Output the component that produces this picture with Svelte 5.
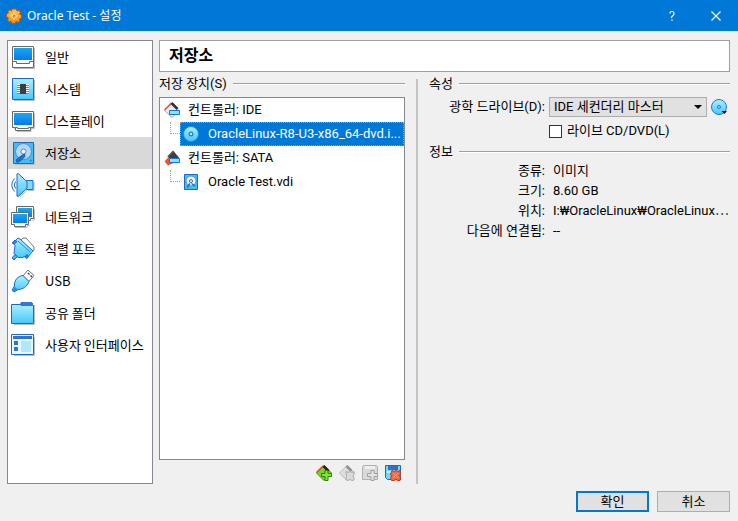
<script lang="ts">
  type Page = { id: string; label: string };

  const pages: Page[] = [
    { id: 'general', label: '일반' },
    { id: 'system', label: '시스템' },
    { id: 'display', label: '디스플레이' },
    { id: 'storage', label: '저장소' },
    { id: 'audio', label: '오디오' },
    { id: 'network', label: '네트워크' },
    { id: 'serial', label: '직렬 포트' },
    { id: 'usb', label: 'USB' },
    { id: 'shared', label: '공유 폴더' },
    { id: 'interface', label: '사용자 인터페이스' }
  ];

  const controllers = [
    { name: '컨트롤러: IDE', kind: 'ide', medium: 'OracleLinux-R8-U3-x86_64-dvd.i...', icon: 'disc' },
    { name: '컨트롤러: SATA', kind: 'sata', medium: 'Oracle Test.vdi', icon: 'disk' }
  ];

  const info = [
    { label: '종류:', value: '이미지' },
    { label: '크기:', value: '8.60 GB' },
    { label: '위치:', value: 'I:₩OracleLinux₩OracleLinux⋯' },
    { label: '다음에 연결됨:', value: '--' }
  ];

  let current = $state('storage');
  let selected = $state('ide');
  let live = $state(false);
</script>

{#snippet pageIcon(id: string)}
  <svg class="page-icon" viewBox="0 0 24 24" aria-hidden="true">
    {#if id === 'general'}
      <path d="M3 23.500H23.500V3" fill="none" stroke="#bdbdbd" />
      <path d="M1.500 1.500h21v21h-21z" fill="#fff" stroke="#686868" />
      <path d="M3 3h18v12H3z" fill="url(#screen)" />
      <path d="M1.500 16.500h4v2h13v-2h4" fill="none" stroke="#686868" />
    {:else if id === 'system'}
      <path d="M3 23.500H23.500V3" fill="none" stroke="#bdbdbd" />
      <path d="M1.500 1.500h21v21h-21z" fill="url(#sky)" stroke="#1d68cc" />
      <path d="M6 7.500h12M6 9.500h12M6 11.500h12M6 13.500h12M6 15.500h12" stroke="#e8f8ff" />
      <path d="M6 8.500h12M6 10.500h12M6 12.500h12M6 14.500h12M6 16.500h12" stroke="#5b8fa8" />
      <path d="M9 7h6v10H9z" fill="#3a3d44" />
    {:else if id === 'display'}
      <path d="M3 19.500h3v3h14v-3h3.500V4" fill="none" stroke="#bdbdbd" />
      <path d="M1.500 2.500h21v16h-3v3h-15v-3h-3z" fill="#fff" stroke="#686868" />
      <path d="M3 4h18v12H3z" fill="url(#screen)" />
      <path d="M4.500 18.500h2v1h11v-1h2" fill="none" stroke="#686868" />
    {:else if id === 'storage'}
      <path d="M4 23.500H23.500V3" fill="none" stroke="#bdbdbd" />
      <path d="M2.500 1.500h20v21h-20z" fill="#42bdf7" stroke="#1d68cc" />
      <circle cx="12.500" cy="10.500" r="8" fill="#b5d7f0" stroke="#3e91df" />
      <circle cx="12.500" cy="10.500" r="2.500" fill="#eaf6fd" stroke="#4a92cc" />
      <path d="M11.500 14l2-1 .5 2.500-4 4-4 2-1-2.500 3-2.500z" fill="#1f6cc9" stroke="#1b5fb2" />
      <path d="M19 19.500h1.500" stroke="#1d68cc" stroke-width="1.500" />
    {:else if id === 'audio'}
      <path d="M16.500 17l-7.500 6.500M17 17.500h6V9" fill="none" stroke="#bdbdbd" />
      <path d="M15.500 7.500h6.500v9h-6.500z" fill="#80dcff" stroke="#1d68cc" />
      <path d="M6 .8h1.500l8.500 8v6.500l-8.500 8H6z" fill="url(#sky)" stroke="#1d68cc" />
      <path d="M3.500 5.500Q-2 12 3.500 18.500M4.500 8.500Q2 12 4.500 15.500" fill="none" stroke="#1d68cc" />
    {:else if id === 'network'}
      <path d="M23.500 4v11h-3" fill="none" stroke="#bdbdbd" />
      <path d="M5.500 1.500h17v12h-3v2h-14z" fill="#fff" stroke="#686868" />
      <path d="M7 3h14v9H7z" fill="url(#screen)" />
      <path d="M4 22.500h12v-2h2.500" fill="none" stroke="#bdbdbd" />
      <path d="M.5 7.500h17v12h-3v2h-11v-2h-3z" fill="#fff" stroke="#686868" />
      <path d="M2 9h14v9H2z" fill="url(#screen)" />
    {:else if id === 'serial'}
      <path d="M10 3l2-2h3l8 9v3l-2 1z" fill="#fff" stroke="#777" />
      <path d="M2 6l5-5 2 1 13 12-6 7-1.500-1.500-3.500 1H7l-4-4 1-8z" fill="url(#sky)" stroke="#1d68cc" />
      <path d="M1 6l3-3 2 1.500L3.500 7zM14 20l2-2.500 1.500 2L16 21.500z" fill="#278be0" stroke="#1d68cc" />
      <path d="M7 4l12 11" stroke="#278be0" />
      <path d="M1 21l3-3.500 2.500 2L3 23z" fill="#46b7f4" stroke="#1d68cc" />
    {:else if id === 'usb'}
      <path d="M17 1l6 5.500-5 6-6-5.500z" fill="#fff" stroke="#6d6d6d" />
      <path d="M17 4l1.500 1.500M19.500 6.500L21 8" stroke="#444" stroke-width="1.500" />
      <path d="M12 6.500l6 6c-2 5-6 8-11 8L3 23l-2-2 2.500-4C3 11 7 7 12 6.500z" fill="url(#sky)" stroke="#1d68cc" />
      <path d="M1 22l3-4 2.500 2L3 23z" fill="#278be0" />
    {:else if id === 'shared'}
      <path d="M3 23.500H23.500V4" fill="none" stroke="#bdbdbd" />
      <path d="M8 5l2-4h11l1 4z" fill="#3278d2" />
      <path d="M.5 3.500H9l2 1h11.500v18H.5z" fill="url(#sky)" stroke="#1d68cc" />
      <path d="M10 2h12v3H12z" fill="#3278d2" />
    {:else}
      <path d="M3 22.500H23.500V4" fill="none" stroke="#bdbdbd" />
      <path d="M.5 1.500h22v20H.5z" fill="#e8f9ff" stroke="#1d68cc" />
      <path d="M2 3h19v3H2z" fill="#2f75cf" />
      <path d="M3 8h4v4H3zM3 14h4v4H3z" fill="#2f75cf" />
      <path d="M10 8h10v11H10z" fill="#afe8fd" />
    {/if}
  </svg>
{/snippet}

{#snippet mediumIcon(kind: string)}
  <svg class="small-icon" viewBox="0 0 16 16" aria-hidden="true">
    {#if kind === 'disc'}
      <circle cx="8" cy="8" r="7.500" fill="url(#sky)" stroke="#2b8bd9" />
      <circle cx="8" cy="8" r="2.500" fill="#2488d5" />
      <circle cx="8" cy="8" r="1" fill="#fff" />
    {:else}
      <path d="M1.500 .5h13v15h-13z" fill="#42bdf7" stroke="#1d68cc" />
      <circle cx="8" cy="7" r="5" fill="#f2f9fe" stroke="#4c95d6" />
      <circle cx="8" cy="7" r="1.500" fill="#fff" stroke="#1f6cc9" />
      <path d="M8.500 9.500l3.500 2.500M7 9.500L4 13.500" stroke="#1f6cc9" stroke-width="1.500" />
    {/if}
  </svg>
{/snippet}

{#snippet controllerIcon(kind: string)}
  <svg class="small-icon" viewBox="0 0 16 16" aria-hidden="true">
    {#if kind === 'ide'}
      <path d="M.5 8.500l7.500-7 7 7-7 7z" fill="#ececec" stroke="#aaa" />
      <path d="M.5 8L7.500 1" stroke="#e64f28" stroke-width="1.500" />
      <path d="M7.500 1l6 6" stroke="#303030" stroke-width="2.500" />
    {:else}
      <path d="M3.500 6L9 .5l6 7-7 6z" fill="#3e4144" />
      <path d="M.5 11.500L4.500 7l5 4v2L4 15.500z" fill="#ee5429" />
      <path d="M3.500 7l5-5" stroke="#777" />
    {/if}
    <path d="M5.500 8.500h10v4h-10z" fill="#8ae2ff" stroke="#1975d2" />
  </svg>
{/snippet}

<div class="window">
  <svg class="defs" width="0" height="0" aria-hidden="true">
    <defs>
      <linearGradient id="screen" x2="0" y2="1">
        <stop stop-color="#18a9e8" />
        <stop offset="1" stop-color="#0878f0" />
      </linearGradient>
      <linearGradient id="sky" x2="0" y2="1">
        <stop stop-color="#b0eeff" />
        <stop offset="1" stop-color="#43c8fc" />
      </linearGradient>
      <linearGradient id="gear" x2="0" y2="1">
        <stop stop-color="#ffc34a" />
        <stop offset="1" stop-color="#f28a16" />
      </linearGradient>
    </defs>
  </svg>

  <header class="titlebar">
    <svg class="small-icon" viewBox="0 0 16 16" aria-hidden="true">
      <path d="M6 1h4l1 2 2-.5 1.500 2-1 1.500 2 1v3l-2 1 .5 2-2 1.500-2-1-1 2H6l-1-2-2 .5L1.500 12l1-2-2-1V6l2-1L2 3.500 3.500 2l2 1z" fill="url(#gear)" stroke="#b85a0c" />
      <path d="M8 4v8M4 8h8M5.500 5.500l5 5M10.500 5.500l-5 5" stroke="#fff0b8" />
      <circle cx="8" cy="8" r="1.500" fill="#ea8520" />
    </svg>
    <h1>Oracle Test - 설정</h1>
    <button class="caption" type="button" aria-label="도움말">
      <svg viewBox="0 0 12 12"><path d="M4 3.500Q4 1.500 6 1.500T8 3.500Q8 5 6.500 6T6 8M6 9.500v1.500" fill="none" stroke="#fff" stroke-width="1.200" /></svg>
    </button>
    <button class="caption" type="button" aria-label="닫기">
      <svg viewBox="0 0 12 12"><path d="M1.500 1.500l9 9M10.500 1.500l-9 9" fill="none" stroke="#fff" stroke-width="1.200" /></svg>
    </button>
  </header>

  <div class="content">
    <nav class="pages">
      {#each pages as page}
        <button type="button" class="page" class:active={current === page.id} onclick={() => (current = page.id)}>
          {@render pageIcon(page.id)}
          <span>{page.label}</span>
        </button>
      {/each}
    </nav>

    <main>
      <h2 class="page-title">저장소</h2>

      <div class="panes">
        <section class="devices">
          <h3 class="group">저장 장치(S)</h3>
          <div class="tree" role="tree">
            {#each controllers as controller}
              <div class="controller" role="treeitem" aria-selected="false">
                {@render controllerIcon(controller.kind)}
                <span>{controller.name}</span>
              </div>
              <div class="branch">
                <span class="twig"></span>
                <button
                  type="button"
                  class="medium"
                  role="treeitem"
                  aria-selected={selected === controller.kind}
                  class:selected={selected === controller.kind}
                  onclick={() => (selected = controller.kind)}
                >
                  {@render mediumIcon(controller.icon)}
                  <span>{controller.medium}</span>
                </button>
              </div>
            {/each}
          </div>

          <div class="tools">
            <button type="button" aria-label="컨트롤러 추가">
              <svg class="small-icon" viewBox="0 0 16 16">
                <path d="M.5 8L8 .5 15.500 8 8 15.500z" fill="#77d42d" stroke="#4b8f19" />
                <path d="M.5 7.500L7 1" stroke="#e0492a" stroke-width="1.500" />
                <path d="M7.500 1l5 5" stroke="#222" stroke-width="2.500" />
                <path d="M9 5.500h3v3h3.500v3H12v4H9v-4H5.500v-3H9z" fill="#85e82e" stroke="#2d7d0b" />
              </svg>
            </button>
            <button type="button" aria-label="컨트롤러 제거" disabled>
              <svg class="small-icon" viewBox="0 0 16 16">
                <path d="M.5 8L8 .5 15.500 8 8 15.500z" fill="#dedede" stroke="#bcbcbc" />
                <path d="M7.500 1l5 5" stroke="#909090" stroke-width="2.500" />
                <path d="M7 6.500l2 1 2-1 2 1 2-1v3l-1 1.500 1 2v2l-2 .5-2-1-2 1-2-1V12l1-1-1-2z" fill="#dadada" stroke="#aaa" />
              </svg>
            </button>
            <button type="button" aria-label="연결 추가" disabled>
              <svg class="small-icon" viewBox="0 0 16 16">
                <path d="M.5 1.500l1-1h13l1 1v13h-15z" fill="#d9d9d9" stroke="#b0b0b0" />
                <path d="M3 1h10v3H3z" fill="#eee" />
                <path d="M9 5.500h3v3h3.500v3H12v4H9v-4H5.500v-3H9z" fill="#e4e4e4" stroke="#a0a0a0" />
              </svg>
            </button>
            <button type="button" aria-label="연결 제거">
              <svg class="small-icon" viewBox="0 0 16 16">
                <path d="M.5 .5h15v14H2.500l-2-2z" fill="#70d6fc" stroke="#1d68cc" />
                <path d="M3 1h10v4H3z" fill="#2d72ca" />
                <path d="M2 6h11v2H2z" fill="#c5f1ff" />
                <path d="M7 5.500l2 1 2-1 2 1 2-1 .5 3-1 2 1 2-.5 3h-2l-2-1-2 1H6.500l-1-2 1-2.500-1-2z" fill="#f26a43" stroke="#c43718" />
                <path d="M8 8l5 5M13 8l-5 5" stroke="#ff9a70" />
              </svg>
            </button>
          </div>
        </section>

        <section class="details">
          <h3 class="group">속성</h3>
          <div class="fields">
            <label class="name" for="drive">광학 드라이브(D):</label>
            <div class="drive">
              <div class="combo">
                <select id="drive">
                  <option>IDE 세컨더리 마스터</option>
                </select>
                <svg class="arrow" viewBox="0 0 8 4" aria-hidden="true"><path d="M0 0h8L4 4z" /></svg>
              </div>
              <button type="button" class="choose" aria-label="디스크 선택">
                <svg class="small-icon" viewBox="0 0 16 16">
                  <circle cx="8" cy="8" r="7.500" fill="url(#sky)" stroke="#2378cb" />
                  <circle cx="8" cy="8" r="1.500" fill="#9fd8f5" stroke="#2378cb" />
                  <path d="M10.500 12H16l-2.500 3z" fill="#000" />
                </svg>
              </button>
            </div>
            <label class="live">
              <input type="checkbox" bind:checked={live} />
              <span>라이브 CD/DVD(L)</span>
            </label>
          </div>

          <h3 class="group">정보</h3>
          <dl class="info">
            {#each info as row}
              <dt>{row.label}</dt>
              <dd>{row.value}</dd>
            {/each}
          </dl>
        </section>
      </div>
    </main>
  </div>

  <footer>
    <button type="button" class="action default">확인</button>
    <button type="button" class="action">취소</button>
  </footer>
</div>

<style>
  :global(body) {
    background: #f0f0f0;
  }

  .window {
    display: flex;
    flex-direction: column;
    min-height: 100vh;
    box-sizing: border-box;
    background: #f0f0f0;
    color: #000;
    font: 13px/20px Roboto, 'Noto Sans CJK KR', sans-serif;
  }

  .window *,
  .window *::before,
  .window *::after {
    box-sizing: border-box;
  }

  .defs {
    position: absolute;
  }

  h1,
  h2,
  h3,
  dl,
  dd {
    margin: 0;
    font-size: 13px;
    font-weight: 400;
  }

  button,
  select {
    padding: 0;
    border: 0;
    border-radius: 0;
    background: none;
    color: inherit;
    font: inherit;
  }

  svg {
    display: block;
    flex-shrink: 0;
  }

  .page-icon {
    width: 24px;
    height: 24px;
  }

  .small-icon {
    width: 16px;
    height: 16px;
  }

  .titlebar {
    display: flex;
    align-items: center;
    height: 31px;
    padding-left: 6px;
    background: #0078d7;
    color: #fff;
  }

  .titlebar h1 {
    flex: 1;
    padding-left: 5px;
    font-family: 'Noto Sans', 'Noto Sans CJK KR', sans-serif;
    font-size: 12px;
  }

  .caption {
    display: grid;
    place-items: center;
    width: 44px;
    height: 31px;
  }

  .caption svg {
    width: 12px;
    height: 12px;
  }

  .content {
    display: flex;
    flex: 1;
    gap: 6px;
    padding: 9px 8px 7px 7px;
  }

  .pages {
    flex: 0 0 146px;
    border: 1px solid #828790;
    background: #fff;
    font-family: 'Noto Sans CJK KR', sans-serif;
  }

  .page {
    display: flex;
    align-items: center;
    gap: 10px;
    width: 100%;
    height: 32px;
    padding-left: 3px;
    text-align: left;
    white-space: nowrap;
  }

  .page.active {
    background: #d9d9d9;
  }

  main {
    display: flex;
    flex: 1;
    flex-direction: column;
    min-width: 0;
  }

  .page-title {
    height: 32px;
    padding-left: 9px;
    border: 1px solid #a0a0a0;
    background: #fff;
    font-size: 16px;
    font-weight: 700;
    line-height: 30px;
  }

  .panes {
    display: flex;
    flex: 1;
    padding-top: 7px;
  }

  .devices {
    display: flex;
    flex: 0 0 246px;
    flex-direction: column;
    min-width: 0;
  }

  .group {
    display: flex;
    align-items: center;
    gap: 6px;
    height: 10px;
    white-space: nowrap;
  }

  .group::after {
    content: '';
    flex: 1;
    height: 2px;
    border-top: 1px solid #a0a0a0;
    background: #fff;
  }

  .tree {
    flex: 1;
    margin-top: 8px;
    border: 1px solid #828790;
    background: #fff;
  }

  .controller {
    display: flex;
    align-items: center;
    gap: 8px;
    height: 24px;
    padding-left: 4px;
  }

  .branch {
    display: flex;
    height: 24px;
  }

  .twig {
    width: 10px;
    height: 12px;
    margin-left: 10px;
    border-bottom: 1px dotted #a0a0a0;
    border-left: 1px dotted #a0a0a0;
  }

  .medium {
    display: flex;
    flex: 1;
    align-items: center;
    gap: 9px;
    min-width: 0;
    padding-left: 2px;
    border: 1px dotted transparent;
    white-space: nowrap;
  }

  .medium.selected {
    border-color: #ff8728;
    background: #0078d7;
    color: #fff;
  }

  .tools {
    display: flex;
    justify-content: flex-end;
    gap: 7px;
    padding: 5px 4px 3px;
  }

  .details {
    flex: 1;
    min-width: 0;
    margin-left: 11px;
    padding-left: 11px;
    border-left: 2px solid #c4c4c4;
  }

  .fields {
    display: grid;
    grid-template-columns: 116px minmax(0, 1fr);
    column-gap: 4px;
    row-gap: 4px;
    padding: 8px 0 6px;
  }

  .name {
    text-align: right;
  }

  .drive {
    display: flex;
    align-items: center;
    gap: 4px;
  }

  .combo {
    position: relative;
    flex: 1;
  }

  select {
    display: block;
    width: 100%;
    height: 20px;
    padding-left: 4px;
    border: 1px solid #adadad;
    background: #e1e1e1;
    line-height: 18px;
    appearance: none;
  }

  .arrow {
    position: absolute;
    top: 8px;
    right: 5px;
    width: 8px;
    height: 4px;
    pointer-events: none;
  }

  .choose {
    margin-right: 3px;
  }

  .live {
    display: flex;
    grid-column: 2;
    align-items: center;
    gap: 5px;
    height: 20px;
  }

  .live input {
    width: 13px;
    height: 13px;
    margin: 0;
    border: 1px solid #333;
    background: #fff;
    appearance: none;
  }

  .live input:checked {
    box-shadow: inset 0 0 0 2px #fff;
    background: #333;
  }

  .info {
    display: grid;
    grid-template-columns: 116px minmax(0, 1fr);
    column-gap: 8px;
    padding-top: 4px;
  }

  .info dt {
    text-align: right;
  }

  .info dd {
    white-space: nowrap;
  }

  footer {
    display: flex;
    justify-content: flex-end;
    gap: 8px;
    padding: 0 8px 9px;
  }

  .action {
    width: 73px;
    height: 21px;
    border: 1px solid #adadad;
    background: #e1e1e1;
    line-height: 18px;
  }

  .action.default {
    border: 2px solid #0078d7;
    line-height: 16px;
  }
</style>
